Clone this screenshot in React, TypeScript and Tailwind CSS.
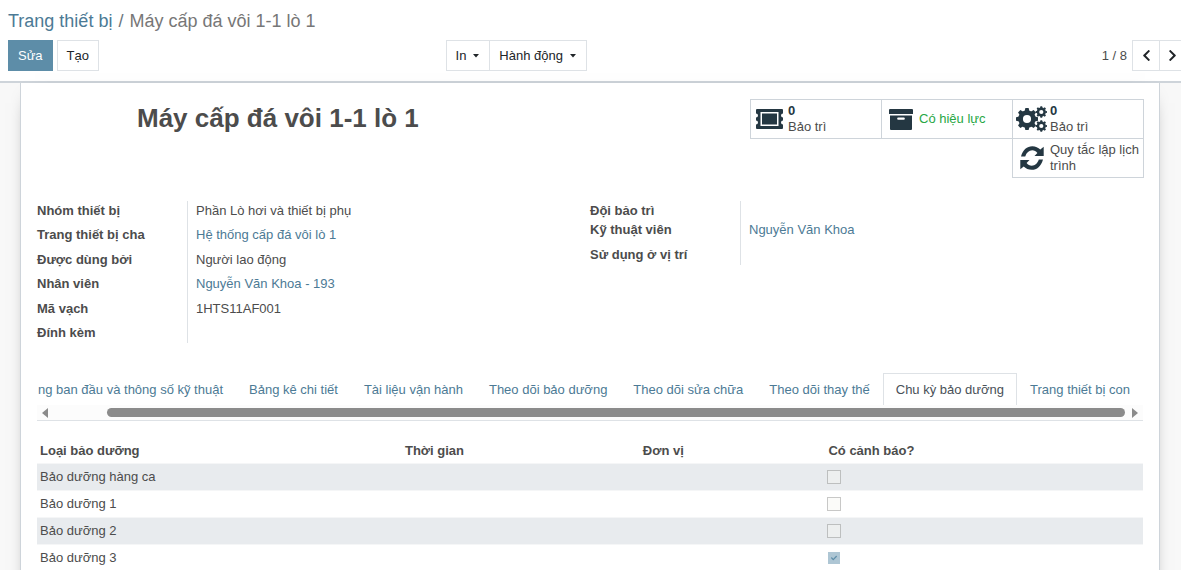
import type { ReactNode } from "react";
import { FaCheck, FaChevronLeft, FaChevronRight } from "react-icons/fa";

const tabs = [
  "Bảng kê chi tiết",
  "Tài liệu vận hành",
  "Theo dõi bảo dưỡng",
  "Theo dõi sửa chữa",
  "Theo dõi thay thế",
  "Chu kỳ bảo dưỡng",
  "Trang thiết bị con",
];

const cycles = [
  { name: "Bảo dưỡng hàng ca", warn: false },
  { name: "Bảo dưỡng 1", warn: false },
  { name: "Bảo dưỡng 2", warn: false },
  { name: "Bảo dưỡng 3", warn: true },
];

const Caret = () => (
  <svg viewBox="0 0 8 4" className="h-1 w-2" fill="currentColor">
    <path d="M1 0h6L4 3.5z" />
  </svg>
);

const TicketIcon = () => (
  <svg viewBox="0 0 27 20" className="h-5 w-[27px]" fill="currentColor" fillRule="evenodd">
    <path d="M1 0h25a1 1 0 0 1 1 1v3.500a2 2 0 0 0 0 4v3a2 2 0 0 0 0 4V19a1 1 0 0 1-1 1H1a1 1 0 0 1-1-1v-3.500a2 2 0 0 0 0-4v-3a2 2 0 0 0 0-4V1a1 1 0 0 1 1-1zM4.500 3v14h18V3zM6 4.500h15v11H6z" />
  </svg>
);

const ArchiveIcon = () => (
  <svg viewBox="0 0 24 21" className="h-[21px] w-6" fill="currentColor" fillRule="evenodd">
    <path d="M1 0h22a1 1 0 0 1 1 1v4H0V1a1 1 0 0 1 1-1zM1 6.500h22V20a1 1 0 0 1-1 1H2a1 1 0 0 1-1-1zM9.300 8.500a1 1 0 0 0 0 2.300h5.400a1 1 0 0 0 0-2.300z" />
  </svg>
);

const Gear = ({ cx, cy, r, teeth }: { cx: number; cy: number; r: number; teeth: number }) => (
  <g transform={`translate(${cx} ${cy})`}>
    <circle r={r * 0.58} fill="none" stroke="currentColor" strokeWidth={r * 0.42} />
    {Array.from({ length: teeth }, (_, i) => (
      <path
        key={i}
        d={`M${-r * 0.22} ${-r * 0.7}L${-r * 0.15} ${-r}H${r * 0.15}L${r * 0.22} ${-r * 0.7}z`}
        transform={`rotate(${(i * 360) / teeth})`}
      />
    ))}
  </g>
);

const CogsIcon = () => (
  <svg viewBox="0 0 31 26" className="h-[26px] w-[31px]" fill="currentColor">
    <Gear cx={11} cy={13} r={11} teeth={8} />
    <Gear cx={25.3} cy={6} r={5.7} teeth={8} />
    <Gear cx={25.3} cy={20} r={5.7} teeth={8} />
  </svg>
);

const RefreshIcon = () => (
  <svg viewBox="0 0 24 24" className="size-6" fill="currentColor">
    <path d="M1 10.500C3 3.500 7 .2 12.300.2c3.200 0 6 1.300 8 3.300L23.700.8V10h-9.200l2.900-3c-1.400-1.700-3.100-2.700-5.200-2.700-3.200 0-5.700 2.300-7 6.200z" />
    <path d="M23 13.500c-2 7-6 10.300-11.300 10.300-3.200 0-6-1.300-8-3.300L.3 23.200V14h9.200l-2.900 3c1.400 1.700 3.100 2.700 5.200 2.700 3.200 0 5.700-2.300 7-6.200z" />
  </svg>
);

const StatButton = ({ icon, children }: { icon: ReactNode; children: ReactNode }) => (
  <button className="-mt-px -ml-px flex h-10 w-[132px] items-center border border-[#ced4da] pl-[3px] text-left leading-4">
    <span className="flex w-[34px] shrink-0 justify-center pr-[3px] text-[#243742]">{icon}</span>
    <span>{children}</span>
  </button>
);

const Field = ({ label, value, link, tight }: { label: string; value?: string; link?: boolean; tight?: boolean }) => (
  <div className={`flex last:h-5 even:not-last:h-[25px] ${tight ? "h-[19px]" : "h-6"}`}>
    <dt className="w-[151px] shrink-0 border-r border-[#dee2e6] font-bold">{label}</dt>
    <dd className="pl-2">
      {link ? <a href="#" className="text-[#4c7a95]">{value}</a> : value}
    </dd>
  </div>
);

const App = () => {
  return (
    <div className="h-screen overflow-hidden bg-[#f8f8f8] font-['Liberation_Sans',Arial,sans-serif] text-[13px] leading-5 text-[#4c4c4c]">
      <header className="border-b-2 border-[#ced4da] bg-white pt-[7px] pb-[10px] pl-2">
        <nav className="mb-[5px] flex gap-[6px] text-lg leading-7">
          <a href="#" className="text-[#4c7a95]">Trang thiết bị</a>
          <span className="text-[#6c757d]">/</span>
          <span className="text-[#777777]">Máy cấp đá vôi 1-1 lò 1</span>
        </nav>
        <div className="flex items-center">
          <div className="flex w-[37.3%] gap-1">
            <button className="h-[31px] bg-[#5d8da8] px-[10px] text-white">Sửa</button>
            <button className="h-[31px] border border-[#dee2e6] px-[9px] text-[#212529]">Tạo</button>
          </div>
          <div className="flex text-[#212529]">
            <button className="flex h-[31px] items-center gap-[6px] border border-[#dee2e6] px-[9px]">In <Caret /></button>
            <button className="-ml-px flex h-[31px] items-center gap-[6px] border border-[#dee2e6] px-[9px]">Hành động <Caret /></button>
          </div>
          <div className="flex flex-1 items-center justify-end">
            <span className="mr-[5px]">1 / 8</span>
            <button aria-label="Trước" className="flex h-[31px] w-7 items-center justify-center border border-[#dee2e6] text-[#212529]"><FaChevronLeft size={13} /></button>
            <button aria-label="Sau" className="-ml-px flex h-[31px] w-[22px] items-center justify-center border border-r-0 border-[#dee2e6] pl-1 text-[#212529]"><FaChevronRight size={13} /></button>
          </div>
        </div>
      </header>

      <main className="mr-[21px] ml-5 min-h-full border-x border-[#ced4da] bg-white px-4 pt-4 shadow-[0_5px_20px_-15px_#000]">
        <div className="flex items-start justify-between">
          <h1 className="ml-[100px] text-[26px] leading-[38px] font-bold">Máy cấp đá vôi 1-1 lò 1</h1>
          <div className="-mr-px flex w-[394px] flex-wrap justify-end pt-px pl-px">
            <StatButton icon={<TicketIcon />}>
              <b className="block text-[#243742]">0</b>Bảo trì
            </StatButton>
            <StatButton icon={<ArchiveIcon />}>
              <span className="text-[#28a745]">Có hiệu lực</span>
            </StatButton>
            <StatButton icon={<CogsIcon />}>
              <b className="block text-[#243742]">0</b>Bảo trì
            </StatButton>
            <StatButton icon={<RefreshIcon />}>Quy tắc lập lịch trình</StatButton>
          </div>
        </div>

        <div className="mt-[23px] flex items-start">
          <dl className="w-1/2">
            <Field label="Nhóm thiết bị" value="Phần Lò hơi và thiết bị phụ" />
            <Field label="Trang thiết bị cha" value="Hệ thống cấp đá vôi lò 1" link />
            <Field label="Được dùng bởi" value="Người lao động" />
            <Field label="Nhân viên" value="Nguyễn Văn Khoa - 193" link />
            <Field label="Mã vạch" value="1HTS11AF001" />
            <Field label="Đính kèm" />
          </dl>
          <dl className="w-1/2">
            <Field label="Đội bảo trì" tight />
            <Field label="Kỹ thuật viên" value="Nguyễn Văn Khoa" link />
            <Field label="Sử dụng ở vị trí" />
          </dl>
        </div>

        <div className="mt-[30px] border-b border-[#dee2e6]">
          <div className="flex overflow-hidden whitespace-nowrap">
            <button className="h-8 shrink-0 border border-b-0 border-transparent pr-3 text-[#4c7a95]">ng ban đầu và thông số kỹ thuật</button>
            {tabs.map((tab) => (
              <button
                key={tab}
                className={`h-8 shrink-0 border border-b-0 px-3 ${tab === "Chu kỳ bảo dưỡng" ? "border-[#dee2e6] text-[#495057]" : "border-transparent text-[#4c7a95]"}`}
              >
                {tab}
              </button>
            ))}
          </div>
          <div className="flex h-[15px] items-center bg-[#fcfcfc] px-[5px]">
            <svg viewBox="0 0 6 10" className="h-[10px] w-[6px]" fill="#8b8b8b"><path d="M6 0v10L0 5z" /></svg>
            <div className="mr-[7px] ml-[59px] h-[9px] flex-1 rounded-full bg-[#8b8b8b]" />
            <svg viewBox="0 0 6 10" className="h-[10px] w-[6px]" fill="#8b8b8b"><path d="M0 0v10l6-5z" /></svg>
          </div>
        </div>

        <table className="mt-[15px] w-full table-fixed text-left">
          <thead>
            <tr className="h-[27px] align-bottom">
              <th className="w-[33%] px-[3px] pb-[2px]">Loại bảo dưỡng</th>
              <th className="w-[21.5%] px-[3px] pb-[2px]">Thời gian</th>
              <th className="w-[16.7%] px-[3px] pb-[2px]">Đơn vị</th>
              <th className="px-1 pb-[2px]">Có cảnh báo?</th>
            </tr>
          </thead>
          <tbody>
            {cycles.map((row) => (
              <tr key={row.name} className="h-[27px] border-y border-[#f5f6f7] odd:bg-[#e8ebee]">
                <td className="px-[3px]">{row.name}</td>
                <td />
                <td />
                <td className="px-[3px]">
                  <span className="grid w-[14px]">
                    <input
                      type="checkbox"
                      disabled
                      checked={row.warn}
                      readOnly
                      aria-label={row.name}
                      className="col-start-1 row-start-1 size-[14px] appearance-none border border-black/20 bg-[#f5f5f0]/40 checked:border-white checked:bg-[#aec6d4]"
                    />
                    {row.warn && <FaCheck size={6} className="col-start-1 row-start-1 place-self-center text-[#5d8da8]" />}
                  </span>
                </td>
              </tr>
            ))}
          </tbody>
        </table>
      </main>
    </div>
  );
};

export default App;
